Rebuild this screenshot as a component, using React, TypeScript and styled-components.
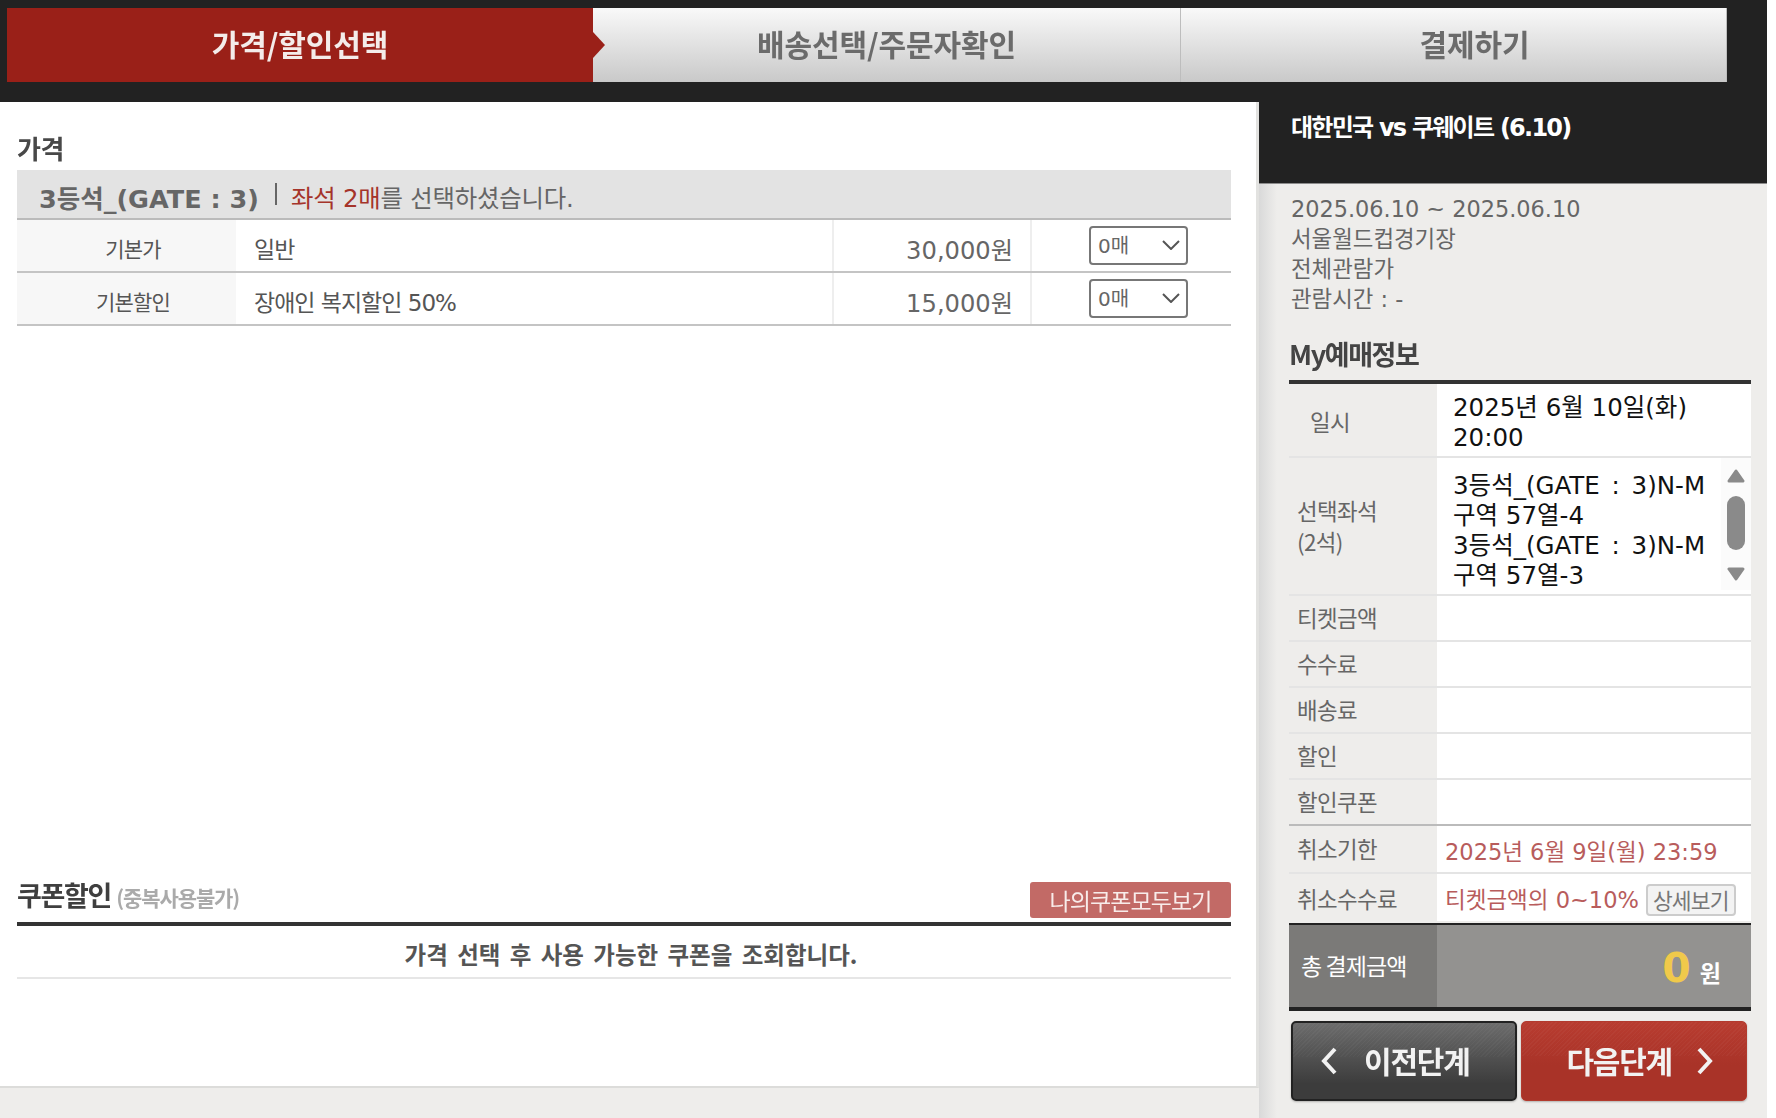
import styled, { createGlobalStyle } from "styled-components";

const GlobalStyle = createGlobalStyle`
  html, body {
    margin: 0;
    padding: 0;
    background: #fff;
  }
  * {
    box-sizing: border-box;
  }
`;

const SANS = `"DejaVu Sans", "Noto Sans CJK KR", sans-serif`;
const KR = `"Noto Sans CJK KR", "Noto Sans", sans-serif`;

const Wrap = styled.div`
  width: 1767px;
  height: 1118px;
  overflow: hidden;
  background: #eeedeb;
  font-family: ${SANS};
`;

const TopBar = styled.div`
  display: flex;
  height: 102px;
  padding: 8px 0 20px 7px;
  background: #222;
`;

const Tab = styled.div<{ $width: number; $active?: boolean; $shift?: number }>`
  position: relative;
  display: flex;
  align-items: center;
  justify-content: center;
  width: ${({ $width }) => $width}px;
  padding-left: ${({ $shift }) => $shift || 0}px;
  padding-bottom: 4px;
  background: ${({ $active }) =>
    $active ? "#9a2018" : "linear-gradient(#f9f9f9, #c9c9c9)"};
  border-right: ${({ $active }) => ($active ? "0" : "1px solid #bdbdbd")};
`;

const TabText = styled.span<{ $active?: boolean }>`
  font-family: ${KR};
  font-size: 30px;
  font-weight: 700;
  letter-spacing: -0.1px;
  color: ${({ $active }) => ($active ? "#f4ecea" : "#6b6b6b")};
  filter: blur(0.6px);
`;

const TabArrow = styled.i`
  position: absolute;
  top: 24px;
  right: -12px;
  z-index: 1;
  border-style: solid;
  border-width: 13px 0 13px 12px;
  border-color: transparent transparent transparent #9a2018;
`;

const Body = styled.div`
  display: flex;
  align-items: flex-start;
`;

const LeftPanel = styled.main`
  display: flex;
  flex-direction: column;
  width: 1259px;
  height: 986px;
  padding: 33px 25px 0 17px;
  background: #fff;
  border-right: 3px solid #e2e2e0;
  border-bottom: 2px solid #dcdcda;
`;

const SectionTitle = styled.h2`
  margin: 0 0 10px;
  height: 25px;
  line-height: 25px;
  font-family: ${KR};
  font-size: 26px;
  font-weight: 700;
  letter-spacing: -0.5px;
  color: #484848;
  filter: blur(0.5px);
`;

const SeatHeader = styled.div`
  display: flex;
  align-items: center;
  height: 50px;
  padding: 5px 0 0 22px;
  background: #e3e3e3;
  border-bottom: 2px solid #bbb;
`;

const SeatGrade = styled.strong`
  margin-top: -1px;
  font-size: 25.5px;
  font-weight: 700;
  color: #666;
`;

const SeatDivider = styled.i`
  width: 2px;
  height: 22px;
  margin: -5px 14px 0 16px;
  background: #666;
`;

const SeatNote = styled.span`
  font-size: 24.4px;
  letter-spacing: -0.2px;
  color: #666;
`;

const Red = styled.em`
  font-style: normal;
  color: #a5342a;
`;

const PriceRow = styled.div`
  display: grid;
  grid-template-columns: 219px 596px 200px 199px;
  height: 53px;
  border-bottom: 2px solid #c4c4c4;
`;

const PriceLabel = styled.div`
  padding: 9px 0 0 13px;
  background: #f7f7f7;
  text-align: center;
  font-family: ${KR};
  font-size: 21px;
  letter-spacing: -0.8px;
  line-height: 38px;
  color: #555;
`;

const PriceName = styled.div`
  padding: 11px 0 0 18px;
  font-family: ${SANS};
  font-size: 23px;
  letter-spacing: -1px;
  line-height: 38px;
  color: #555;
`;

const PriceValue = styled.div`
  padding: 12px 17px 0 0;
  border-left: 2px solid #eee;
  border-right: 2px solid #eee;
  text-align: right;
  font-size: 24.2px;
  line-height: 38px;
  color: #666;
`;

const SelectCell = styled.div`
  padding: 6px 0 0 57px;
`;

const FakeSelect = styled.div`
  display: flex;
  align-items: center;
  justify-content: space-between;
  width: 99px;
  height: 39px;
  padding: 0 6px 2px 7px;
  border: 2px solid #777;
  border-radius: 4px;
  font-size: 20px;
  color: #666;
`;

const CouponHead = styled.div`
  display: flex;
  align-items: flex-start;
  justify-content: space-between;
  height: 45px;
  margin-top: auto;
  border-bottom: 4px solid #333;
`;

const CouponTitle = styled.h2`
  margin: 0;
  font-family: ${KR};
  font-size: 27px;
  font-weight: 700;
  line-height: 28px;
  letter-spacing: -1.3px;
  color: #3f3f3f;
  filter: blur(0.5px);
`;

const CouponSub = styled.span`
  margin-left: 5px;
  font-family: ${KR};
  font-size: 21px;
  font-weight: 700;
  letter-spacing: -1.1px;
  color: #aaa;
`;

const CouponButton = styled.button`
  width: 201px;
  height: 36px;
  margin-top: 1px;
  padding: 0;
  border: 0;
  border-radius: 3px;
  background: #c26a66;
  font-family: ${KR};
  font-size: 23px;
  letter-spacing: -0.9px;
  color: #f8ecea;
  filter: blur(0.3px);
`;

const CouponEmpty = styled.div`
  height: 53px;
  margin-bottom: 107px;
  padding-left: 14px;
  border-bottom: 2px solid #e6e6e6;
  text-align: center;
  font-family: ${KR};
  font-size: 23.5px;
  font-weight: 700;
  word-spacing: 4px;
  line-height: 56px;
  color: #555;
`;

const RightPanel = styled.aside`
  flex: 1;
  height: 1016px;
  background: linear-gradient(90deg, #d9d9d9, #eeedeb 18px);
`;

const EventHead = styled.div`
  height: 82px;
  padding: 7px 0 0 32px;
  background: #222;
  border-bottom: 1px solid #8c8c8c;
  font-family: ${SANS};
  font-size: 24px;
  font-weight: 700;
  letter-spacing: -1.75px;
  line-height: 38px;
  color: #fff;
`;

const EventInfo = styled.div`
  margin-top: 10px;
  padding-left: 32px;
  font-size: 22.4px;
  line-height: 30px;
  color: #666;
`;

const InfoLine = styled.div``;

const SummaryTitle = styled.h2`
  margin: 21px 0 7px 30px;
  height: 38px;
  font-family: ${KR};
  font-size: 27px;
  font-weight: 700;
  letter-spacing: -1.4px;
  line-height: 38px;
  color: #444;
  filter: blur(0.5px);
`;

const SummaryTable = styled.div`
  width: 462px;
  margin-left: 30px;
  border-top: 4px solid #333;
`;

const SummaryRow = styled.div<{ $height: number; $line?: string }>`
  display: grid;
  grid-template-columns: 148px 1fr;
  height: ${({ $height }) => $height}px;
  border-bottom: 2px solid ${({ $line }) => $line || "#e4e4e4"};
`;

const SummaryLabel = styled.div<{ $indent?: number; $low?: boolean }>`
  display: flex;
  align-items: center;
  padding-left: ${({ $indent }) => $indent || 8}px;
  padding-top: ${({ $low }) => ($low ? "2px" : "0")};
  padding-bottom: ${({ $low }) => ($low ? "0" : "2px")};
  font-family: ${KR};
  font-size: 22.4px;
  line-height: 31px;
  letter-spacing: -0.6px;
  color: #666;
`;

const SeatLabel = styled(SummaryLabel)`
  padding-top: 0;
  padding-bottom: 0;
`;

const SummaryValue = styled.div<{ $pad?: number; $top?: number }>`
  position: relative;
  display: flex;
  align-items: center;
  padding-left: ${({ $pad }) => $pad || 16}px;
  padding-top: ${({ $top }) => $top || 0}px;
  background: #fff;
  font-size: 24.5px;
  line-height: 30px;
  color: #111;
`;

const ValueLines = styled.div``;

const Colon = styled.span`
  margin: 0 4px;
`;

const ScrollTrack = styled.div`
  position: absolute;
  top: 0;
  right: 0;
  display: flex;
  flex-direction: column;
  align-items: center;
  justify-content: space-between;
  width: 30px;
  height: 132px;
  padding: 11px 0 9px;
  background: #fbfbfb;
`;

const ScrollThumb = styled.div`
  width: 18px;
  height: 54px;
  margin-bottom: 4px;
  border-radius: 9px;
  background: #8a8a8a;
`;

const Notice = styled.span`
  font-size: 22.5px;
  color: #b85c5c;
`;

const DetailButton = styled.button`
  width: 90px;
  height: 32px;
  margin-left: 7px;
  padding: 0;
  border: 2px solid #ccc;
  border-radius: 4px;
  background: #f3f3f3;
  font-family: ${KR};
  font-size: 21.5px;
  letter-spacing: -0.8px;
  line-height: 26px;
  color: #777;
`;

const TotalRow = styled.div`
  display: grid;
  grid-template-columns: 148px 1fr;
  height: 88px;
  border-top: 2px solid #222;
  border-bottom: 4px solid #222;
`;

const TotalLabel = styled.div`
  display: flex;
  align-items: center;
  padding: 0 0 2px 12px;
  background: #7b7a78;
  font-family: ${KR};
  font-size: 23px;
  letter-spacing: -0.9px;
  color: #fff;
`;

const TotalValue = styled.div`
  display: flex;
  align-items: baseline;
  justify-content: flex-end;
  padding: 19px 30px 0 0;
  background: #939290;
  color: #fff;
`;

const TotalAmount = styled.strong`
  font-size: 41px;
  font-weight: 700;
  color: #f0c94b;
`;

const TotalUnit = styled.span`
  margin-left: 9px;
  font-family: ${KR};
  font-size: 23px;
  font-weight: 700;
`;

const StepButtons = styled.div`
  display: flex;
  gap: 4px;
  margin: 10px 0 0 32px;
`;

const StepButton = styled.button<{ $next?: boolean }>`
  display: flex;
  align-items: center;
  justify-content: ${({ $next }) => ($next ? "flex-end" : "flex-start")};
  gap: ${({ $next }) => ($next ? "24px" : "26px")};
  width: 226px;
  height: 80px;
  padding: ${({ $next }) => ($next ? "0 32px 0 0" : "0 0 0 27px")};
  border: ${({ $next }) => ($next ? "1px solid #b23a2e" : "2px solid #222")};
  border-radius: 5px;
  background:
    repeating-linear-gradient(
      135deg,
      rgba(255, 255, 255, 0.03) 0 1px,
      transparent 1px 3px
    )
    0 0 / 100% 34px no-repeat,
    ${({ $next }) =>
      $next
        ? "linear-gradient(#b83c30, #a93328 55%)"
        : "linear-gradient(#6c6c6c, #3c3c3c 80%)"};
  box-shadow: 0 1px 2px rgba(0, 0, 0, 0.25);
  font-family: ${KR};
  font-size: 30px;
  font-weight: 700;
  letter-spacing: -1.2px;
  color: #f2f2f2;
`;

const StepText = styled.span`
  padding-bottom: 3px;
  filter: blur(0.5px);
`;

const Chevron = ({ left }: { left?: boolean }) => (
  <svg width="18" height="28" viewBox="0 0 18 28" fill="none">
    <path
      d={left ? "M15 2 L4 14 L15 26" : "M3 2 L14 14 L3 26"}
      stroke="#f2f2f2"
      strokeWidth="4"
    />
  </svg>
);

const SelectArrow = () => (
  <svg width="18" height="10" viewBox="0 0 18 10" fill="none">
    <path d="M1 1 L9 9 L17 1" stroke="#555" strokeWidth="2" />
  </svg>
);

const Triangle = ({ down }: { down?: boolean }) => (
  <svg width="18" height="14" viewBox="0 0 18 14">
    <path
      d={down ? "M2 2 H16 L9 12 Z" : "M9 2 L16 12 H2 Z"}
      fill="#8a8a8a"
      stroke="#8a8a8a"
      strokeWidth="3"
      strokeLinejoin="round"
    />
  </svg>
);

const App = () => {
  return (
    <Wrap>
      <GlobalStyle />
      <TopBar>
        <Tab $width={586} $active>
          <TabText $active>가격/할인선택</TabText>
          <TabArrow />
        </Tab>
        <Tab $width={588}>
          <TabText>배송선택/주문자확인</TabText>
        </Tab>
        <Tab $width={546} $shift={42}>
          <TabText>결제하기</TabText>
        </Tab>
      </TopBar>
      <Body>
        <LeftPanel>
          <SectionTitle>가격</SectionTitle>
          <SeatHeader>
            <SeatGrade>3등석_(GATE : 3)</SeatGrade>
            <SeatDivider />
            <SeatNote>
              <Red>좌석 2매</Red>를 선택하셨습니다.
            </SeatNote>
          </SeatHeader>
          <PriceRow>
            <PriceLabel>기본가</PriceLabel>
            <PriceName>일반</PriceName>
            <PriceValue>30,000원</PriceValue>
            <SelectCell>
              <FakeSelect>
                0매
                <SelectArrow />
              </FakeSelect>
            </SelectCell>
          </PriceRow>
          <PriceRow>
            <PriceLabel>기본할인</PriceLabel>
            <PriceName>장애인 복지할인 50%</PriceName>
            <PriceValue>15,000원</PriceValue>
            <SelectCell>
              <FakeSelect>
                0매
                <SelectArrow />
              </FakeSelect>
            </SelectCell>
          </PriceRow>
          <CouponHead>
            <CouponTitle>
              쿠폰할인<CouponSub>(중복사용불가)</CouponSub>
            </CouponTitle>
            <CouponButton>나의쿠폰모두보기</CouponButton>
          </CouponHead>
          <CouponEmpty>가격 선택 후 사용 가능한 쿠폰을 조회합니다.</CouponEmpty>
        </LeftPanel>
        <RightPanel>
          <EventHead>대한민국 vs 쿠웨이트 (6.10)</EventHead>
          <EventInfo>
            <InfoLine>2025.06.10 ~ 2025.06.10</InfoLine>
            <InfoLine>서울월드컵경기장</InfoLine>
            <InfoLine>전체관람가</InfoLine>
            <InfoLine>관람시간 : -</InfoLine>
          </EventInfo>
          <SummaryTitle>My예매정보</SummaryTitle>
          <SummaryTable>
            <SummaryRow $height={74}>
              <SummaryLabel $indent={21} $low>
                일시
              </SummaryLabel>
              <SummaryValue $top={6}>
                <ValueLines>
                  2025년 6월 10일(화)
                  <br />
                  20:00
                </ValueLines>
              </SummaryValue>
            </SummaryRow>
            <SummaryRow $height={138}>
              <SeatLabel>
                선택좌석
                <br />
                (2석)
              </SeatLabel>
              <SummaryValue $top={10}>
                <ValueLines>
                  3등석_(GATE <Colon>:</Colon> 3)N-M
                  <br />
                  구역 57열-4
                  <br />
                  3등석_(GATE <Colon>:</Colon> 3)N-M
                  <br />
                  구역 57열-3
                </ValueLines>
                <ScrollTrack>
                  <Triangle />
                  <ScrollThumb />
                  <Triangle down />
                </ScrollTrack>
              </SummaryValue>
            </SummaryRow>
            <SummaryRow $height={46}>
              <SummaryLabel>티켓금액</SummaryLabel>
              <SummaryValue />
            </SummaryRow>
            <SummaryRow $height={46}>
              <SummaryLabel>수수료</SummaryLabel>
              <SummaryValue />
            </SummaryRow>
            <SummaryRow $height={46}>
              <SummaryLabel>배송료</SummaryLabel>
              <SummaryValue />
            </SummaryRow>
            <SummaryRow $height={46}>
              <SummaryLabel>할인</SummaryLabel>
              <SummaryValue />
            </SummaryRow>
            <SummaryRow $height={46} $line="#bbb">
              <SummaryLabel>할인쿠폰</SummaryLabel>
              <SummaryValue />
            </SummaryRow>
            <SummaryRow $height={48}>
              <SummaryLabel>취소기한</SummaryLabel>
              <SummaryValue $pad={8} $top={6}>
                <Notice>2025년 6월 9일(월) 23:59</Notice>
              </SummaryValue>
            </SummaryRow>
            <SummaryRow $height={49} $line="transparent">
              <SummaryLabel $low>취소수수료</SummaryLabel>
              <SummaryValue $pad={8} $top={4}>
                <Notice>티켓금액의 0~10%</Notice>
                <DetailButton>상세보기</DetailButton>
              </SummaryValue>
            </SummaryRow>
            <TotalRow>
              <TotalLabel>총 결제금액</TotalLabel>
              <TotalValue>
                <TotalAmount>0</TotalAmount>
                <TotalUnit>원</TotalUnit>
              </TotalValue>
            </TotalRow>
          </SummaryTable>
          <StepButtons>
            <StepButton>
              <Chevron left />
              <StepText>이전단계</StepText>
            </StepButton>
            <StepButton $next>
              <StepText>다음단계</StepText>
              <Chevron />
            </StepButton>
          </StepButtons>
        </RightPanel>
      </Body>
    </Wrap>
  );
};

export default App;
